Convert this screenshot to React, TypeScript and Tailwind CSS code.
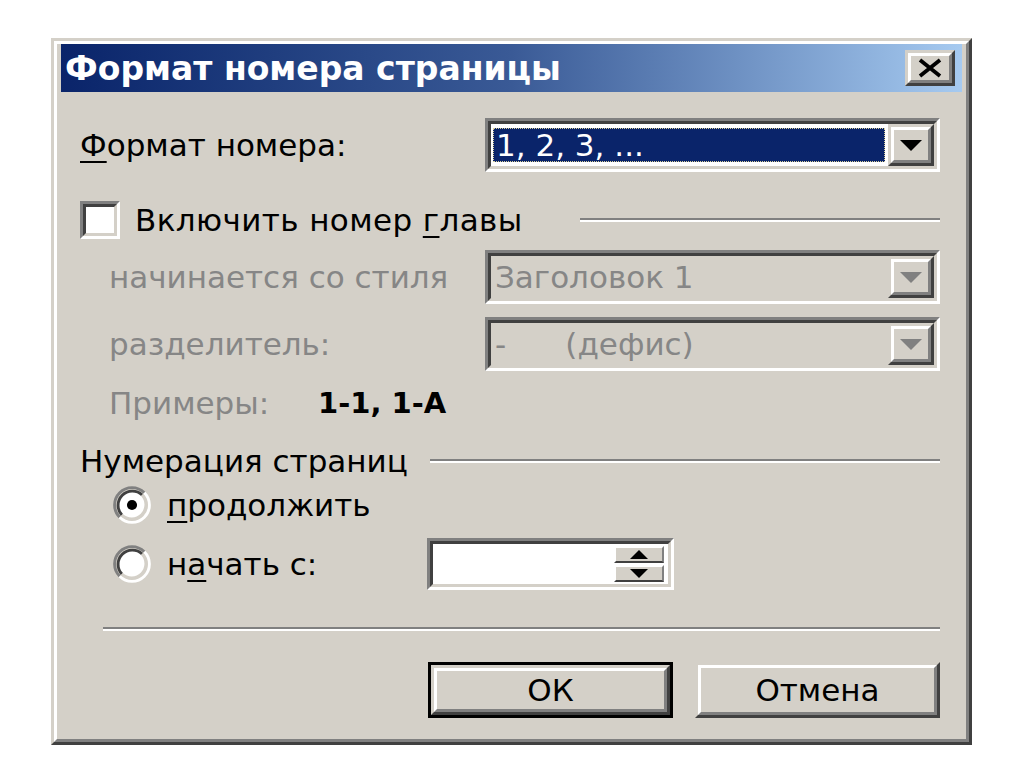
import React from 'react';

// classic 3D borders, scaled up
const Raised = ({ className = '', children }: { className?: string; children?: React.ReactNode }) => (
    <div className={`border-[3px] border-t-[#d4d0c8] border-l-[#d4d0c8] border-b-[#404040] border-r-[#404040] ${className}`}>
        <div className="h-full w-full border-[3px] border-t-white border-l-white border-b-[#808080] border-r-[#808080] bg-[#d4d0c8] flex items-center justify-center">
            {children}
        </div>
    </div>
);

const Sunken = ({ className = '', inner = 'bg-white', children }: { className?: string; inner?: string; children?: React.ReactNode }) => (
    <div className={`border-[3px] border-t-[#808080] border-l-[#808080] border-b-white border-r-white ${className}`}>
        <div className={`h-full w-full border-[3px] border-t-[#404040] border-l-[#404040] border-b-[#d4d0c8] border-r-[#d4d0c8] flex ${inner}`}>
            {children}
        </div>
    </div>
);

const Arrow = ({ color = '#000', up = false }: { color?: string; up?: boolean }) => (
    <svg width="22" height="11" viewBox="0 0 22 11">
        <polygon points={up ? '0,11 22,11 11,0' : '0,0 22,0 11,11'} fill={color} />
    </svg>
);

const DropButton = ({ disabled }: { disabled?: boolean }) => (
    <Raised className="w-[46px] h-full shrink-0">
        <Arrow color={disabled ? '#808080' : '#000'} />
    </Raised>
);

const Etched = ({ className = '' }: { className?: string }) => (
    <div className={`h-[4px] border-t-2 border-t-[#808080] border-b-2 border-b-white ${className}`} />
);

const Radio = ({ checked }: { checked?: boolean }) => (
    <svg width="38" height="38" viewBox="0 0 12 12" className="shrink-0">
        <circle cx="6" cy="6" r="4.2" fill="#fff" />
        <path d="M9.89 2.11 A5.5 5.5 0 0 0 2.11 9.89" stroke="#808080" strokeWidth="0.9" fill="none" />
        <path d="M2.11 9.89 A5.5 5.5 0 0 0 9.89 2.11" stroke="#fff" strokeWidth="0.9" fill="none" />
        <path d="M9.18 2.82 A4.5 4.5 0 0 0 2.82 9.18" stroke="#404040" strokeWidth="0.9" fill="none" />
        <path d="M2.82 9.18 A4.5 4.5 0 0 0 9.18 2.82" stroke="#d4d0c8" strokeWidth="0.9" fill="none" />
        {checked && <circle cx="6" cy="6" r="1.6" fill="#000" />}
    </svg>
);

const App = () => {
    return (
        <div className="min-h-screen bg-white text-black text-[31px] leading-none" style={{ fontFamily: '"DejaVu Sans", sans-serif' }}>
            <div className="pt-[38px] pl-[51px]">
                <div className="w-[921px] h-[707px] border-[3px] border-t-[#d4d0c8] border-l-[#d4d0c8] border-b-[#404040] border-r-[#404040]">
                    <div className="h-full border-[3px] border-t-white border-l-white border-b-[#808080] border-r-[#808080] bg-[#d4d0c8] px-[4px] flex flex-col">
                        {/* title bar */}
                        <div className="h-[48px] shrink-0 bg-linear-to-r from-[#0a246a] via-[#3a5a96] to-[#a6caf0] flex items-center justify-between pl-[4px] pr-[7px]">
                            <span className="text-white font-bold text-[33px]">
                                Формат номера страницы
                            </span>
                            <Raised className="w-[50px] h-[36px]">
                                <svg width="28" height="20" viewBox="0 0 28 20">
                                    <path d="M4 2 L24 18 M24 2 L4 18" stroke="#000" strokeWidth="3.8" />
                                </svg>
                            </Raised>
                        </div>

                        <div className="flex flex-col pl-[19px] pr-[22px]">
                            {/* format */}
                            <div className="mt-[26px] h-[54px] flex items-center">
                                <div className="w-[405px] shrink-0"><span className="underline underline-offset-[5px] decoration-2">Ф</span>ормат номера:</div>
                                <Sunken className="flex-1 h-full">
                                    <div className="flex-1 mt-[4px] mb-[4px] ml-[2px] mr-[3px] bg-[#0a246a] border border-dotted border-[#d8cf9a] text-white flex items-center pl-[2px]">
                                        1, 2, 3, ...
                                    </div>
                                    <DropButton />
                                </Sunken>
                            </div>

                            {/* chapter */}
                            <div className="mt-[30px] h-[36px] flex items-center">
                                <Sunken className="w-[40px] h-[38px] shrink-0" />
                                <span className="ml-[15px] tracking-[0.4px]">Включить номер <span className="underline underline-offset-[5px] decoration-2">г</span>лавы</span>
                                <Etched className="flex-1 ml-[57px]" />
                            </div>

                            <div className="mt-[12px] h-[54px] flex items-center text-[#868686]">
                                <div className="w-[405px] shrink-0 pl-[29px]">начинается со стиля</div>
                                <Sunken className="flex-1 h-full" inner="bg-[#d4d0c8]">
                                    <div className="flex-1 flex items-center pl-[4px]">Заголовок 1</div>
                                    <DropButton disabled />
                                </Sunken>
                            </div>

                            <div className="mt-[13px] h-[54px] flex items-center text-[#868686]">
                                <div className="w-[405px] shrink-0 pl-[29px]">разделитель:</div>
                                <Sunken className="flex-1 h-full" inner="bg-[#d4d0c8]">
                                    <div className="flex-1 flex items-center pl-[4px] whitespace-pre">-      (дефис)</div>
                                    <DropButton disabled />
                                </Sunken>
                            </div>

                            <div className="mt-[17px] h-[30px] flex items-center">
                                <div className="w-[238px] shrink-0 pl-[29px] text-[#868686]">Примеры:</div>
                                <div className="font-bold text-[29px]">1-1, 1-А</div>
                            </div>

                            {/* page numbering */}
                            <div className="mt-[28px] h-[30px] flex items-center">
                                <span>Нумерация страниц</span>
                                <Etched className="flex-1 ml-[22px]" />
                            </div>

                            <div className="mt-[12px] h-[34px] flex items-center pl-[33px]">
                                <Radio checked />
                                <span className="ml-[16px]"><span className="underline underline-offset-[5px] decoration-2">п</span>родолжить</span>
                            </div>

                            <div className="mt-[16px] h-[52px] flex items-center pl-[33px]">
                                <Radio />
                                <span className="ml-[16px] w-[260px]">н<span className="underline underline-offset-[5px] decoration-2">а</span>чать с:</span>
                                <Sunken className="w-[247px] h-full">
                                    <div className="flex-1" />
                                    <div className="w-[50px] flex flex-col mr-[4px] my-[2px] gap-[2px]">
                                        <div className="flex-1 border-2 border-t-white border-l-white border-b-[#404040] border-r-[#808080] bg-[#d4d0c8] flex items-center justify-center">
                                            <svg width="18" height="9" viewBox="0 0 18 9"><polygon points="0,9 18,9 9,0" fill="#000" /></svg>
                                        </div>
                                        <div className="flex-1 border-2 border-t-white border-l-white border-b-[#404040] border-r-[#808080] bg-[#d4d0c8] flex items-center justify-center">
                                            <svg width="18" height="9" viewBox="0 0 18 9"><polygon points="0,0 18,0 9,9" fill="#000" /></svg>
                                        </div>
                                    </div>
                                </Sunken>
                            </div>

                            <Etched className="mt-[37px] ml-[23px]" />

                            <div className="mt-[31px] h-[56px] flex justify-end gap-[22px]">
                                <div className="w-[245px] h-full border-[3px] border-black">
                                    <Raised className="w-full h-full">ОК</Raised>
                                </div>
                                <Raised className="w-[245px] h-full">Отмена</Raised>
                            </div>
                        </div>
                    </div>
                </div>
            </div>
        </div>
    );
};

export default App;
